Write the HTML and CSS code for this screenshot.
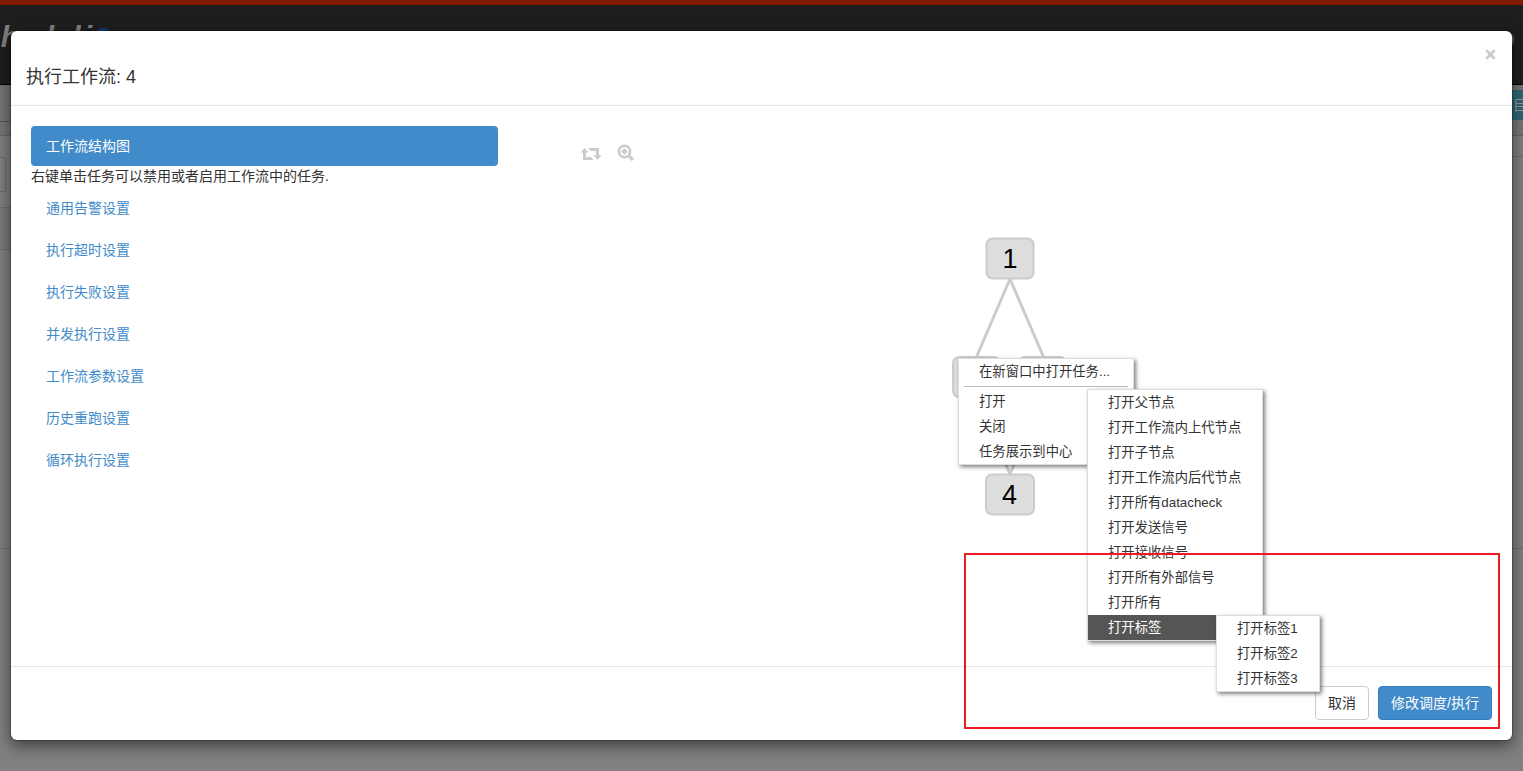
FILE: index.html
```
<!DOCTYPE html>
<html lang="zh-CN">
<head>
<meta charset="utf-8">
<title>执行工作流</title>
<link rel="stylesheet" href="styles.css">
</head>
<body>
<div class="page">
  <div class="strip"></div>
  <header class="navbar"><span class="brand">chedul<span class="brand-i">i</span></span><span class="brand-dot"></span><span class="avatar"></span></header>
  <div class="toolbar"><span class="tool-left"></span><span class="tool-right">项目</span></div>
  <div class="row row-a"></div>
  <div class="row row-b"><span class="tab-edge"></span></div>
  <div class="row row-c"></div>
  <div class="row row-d"></div>
</div>
<div class="modal">
  <div class="modal-header"><h4>执行工作流: 4</h4>
    <button class="close"><svg width="11" height="11" viewBox="0 0 11 11"><path d="M1.300 1.300 9.700 9.700M9.700 1.300 1.300 9.700" stroke="#ccc" stroke-width="2.800"/></svg></button>
  </div>
  <div class="modal-body">
    <nav class="side">
      <a class="item active">工作流结构图</a>
      <p class="hint">右键单击任务可以禁用或者启用工作流中的任务.</p>
      <a class="item">通用告警设置</a>
      <a class="item">执行超时设置</a>
      <a class="item">执行失败设置</a>
      <a class="item">并发执行设置</a>
      <a class="item">工作流参数设置</a>
      <a class="item">历史重跑设置</a>
      <a class="item">循环执行设置</a>
    </nav>
    <div class="graph">
      <div class="graph-tools">
        <svg width="22" height="14" viewBox="0 0 22 14" fill="#ccc"><path d="M4.500 1 8.500 5.500H6V10H11L13.500 13H3V5.500H.5zM8 1H19V8H21.500L17.500 13 13.500 8H16V4H10.500z"/></svg>
        <svg width="18" height="18" viewBox="0 0 18 18"><circle cx="7.500" cy="7.500" r="5.700" fill="none" stroke="#ccc" stroke-width="2.400"/><path d="M11.500 11.500 16 16" stroke="#ccc" stroke-width="3.200"/><path d="M6.200 4.500H8.800V6.200H10.500V8.800H8.800V10.500H6.200V8.800H4.500V6.200H6.200z" fill="#ccc"/></svg>
      </div>
      <svg class="dag" width="120" height="282" viewBox="950 235 120 282">
        <path d="M1010 279 976 358M1010 279 1044 358M976 397 1010 474M1044 397 1010 474" stroke="#ccc" stroke-width="3" fill="none"/>
        <g fill="#ddd" stroke="#ccc" stroke-width="2">
          <rect x="986.500" y="238.500" width="47" height="40" rx="6"/>
          <rect x="953" y="357" width="47" height="40" rx="6"/>
          <rect x="1019" y="357" width="47" height="40" rx="6"/>
          <rect x="986" y="474.500" width="48" height="40" rx="6"/>
        </g>
        <text x="1010" y="268" class="node">1</text>
        <text x="1009.500" y="504" class="node">4</text>
      </svg>
    </div>
  </div>
  <div class="modal-footer"><button class="btn">取消</button><button class="btn primary">修改调度/执行</button></div>
</div>
<ul class="menu menu-main"><li>在新窗口中打开任务...</li><li class="sep"></li><li>打开</li><li>关闭</li><li>任务展示到中心</li></ul>
<ul class="menu menu-open"><li>打开父节点</li><li>打开工作流内上代节点</li><li>打开子节点</li><li>打开工作流内后代节点</li><li>打开所有datacheck</li><li>打开发送信号</li><li>打开接收信号</li><li>打开所有外部信号</li><li>打开所有</li><li class="hover">打开标签</li></ul>
<ul class="menu menu-tags"><li>打开标签1</li><li>打开标签2</li><li>打开标签3</li></ul>
<div class="marker"></div>
</body>
</html>
```
FILE: styles.css
```
* { box-sizing: border-box; }
body { margin: 0; width: 1523px; height: 771px; overflow: hidden; background: #808080; color: #333; font: 14px/20px "Liberation Sans", "Noto Sans CJK SC", sans-serif; }
.page { display: flex; flex-direction: column; height: 771px; }
.strip { height: 5px; background: #801a00; }
.navbar { position: relative; height: 80px; background: #1e1e1e; border-bottom: 1px solid #050505; }
.brand { position: absolute; left: -16px; top: 15px; font: italic bold 30px/34px "Liberation Sans", sans-serif; color: #808080; white-space: nowrap; }
.brand-i { margin-left: 3px; }
.brand-dot { position: absolute; left: 95px; top: 23px; width: 16px; height: 16px; border-radius: 50%; background: #123b73; }
.avatar { position: absolute; left: 1498px; top: 27px; width: 16px; height: 16px; border-radius: 50%; background: #75624f; }
.toolbar { display: flex; justify-content: space-between; height: 51px; background: #777; border-bottom: 1px solid #666; }
.tool-left { width: 11px; height: 37px; border-bottom: 1px solid #555; background: #757575; }
.tool-right { width: 48px; height: 30px; margin-top: 5px; padding-left: 24px; line-height: 30px; background: #2d6778; color: #999; white-space: nowrap; overflow: visible; }
.row { border-bottom: 1px solid #6d6d6d; }
.row-a { height: 21px; margin-left: 20px; }
.row-b { height: 51px; margin-right: 20px; }
.tab-edge { display: block; width: 6px; height: 35px; border: 1px solid #6a6a6a; border-left: 0; border-radius: 0 3px 0 0; }
.row-c { height: 42px; margin-right: 20px; background: #7a7a7a; }
.row-d { height: 299px; }
.modal { position: absolute; left: 11px; top: 31px; width: 1501px; height: 709px; display: flex; flex-direction: column; background: #fff; border-radius: 6px; box-shadow: 0 0 0 1px rgba(0,0,0,.2), 0 5px 15px 1px rgba(0,0,0,.5); }
.modal-header { display: flex; justify-content: space-between; height: 75px; padding: 18px 16px 0 15px; border-bottom: 1px solid #e5e5e5; }
h4 { margin: 18px 0 0; font-size: 18px; line-height: 20px; font-weight: 400; }
.close { display: flex; width: 11px; height: 11px; padding: 0; border: 0; background: none; }
.modal-body { display: flex; flex: 1; padding: 20px; }
.side { width: 467px; display: flex; flex-direction: column; gap: 2px; }
.item { display: block; height: 40px; padding: 10px 15px; color: #428bca; border-radius: 4px; }
.item.active { background: #428bca; color: #fff; }
.hint { margin: -2px 0 0; }
.graph { flex: 1; padding: 18px 0 0 82px; }
.graph-tools { display: flex; align-items: center; gap: 15px; height: 18px; }
.graph-tools svg:first-child { margin-top: 2px; }
.dag { display: block; margin: 73px 0 0 370px; }
.node { font-family: "Liberation Sans", sans-serif; font-size: 27px; text-anchor: middle; fill: #000; }
.modal-footer { display: flex; justify-content: flex-end; gap: 9px; height: 74px; padding: 19px 20px 20px; border-top: 1px solid #e5e5e5; }
.btn { height: 34px; padding: 6px 12px; font: inherit; color: #333; background: #fff; border: 1px solid #ccc; border-radius: 4px; }
.btn.primary { color: #fff; background: #428bca; border-color: #357ebd; }
.menu { position: absolute; margin: 0; padding: 0; list-style: none; background: #fff; border: 1px solid #ddd; box-shadow: 2px 2px 4px rgba(0,0,0,.5); font-size: 13.33px; line-height: 25px; white-space: nowrap; }
.menu li { height: 25px; padding-left: 20px; }
.menu .sep { height: 1px; margin: 2px 5px; padding: 0; background: #bbb; }
.menu .hover { background: #555; color: #fff; }
.menu-main { left: 958px; top: 358px; width: 176px; height: 107px; }
.menu-open { left: 1087px; top: 389px; width: 176px; height: 252px; }
.menu-tags { left: 1216px; top: 615px; width: 104px; height: 77px; }
.marker { position: absolute; left: 964px; top: 553px; width: 536px; height: 176px; border: 2px solid #ed1c24; }
```
